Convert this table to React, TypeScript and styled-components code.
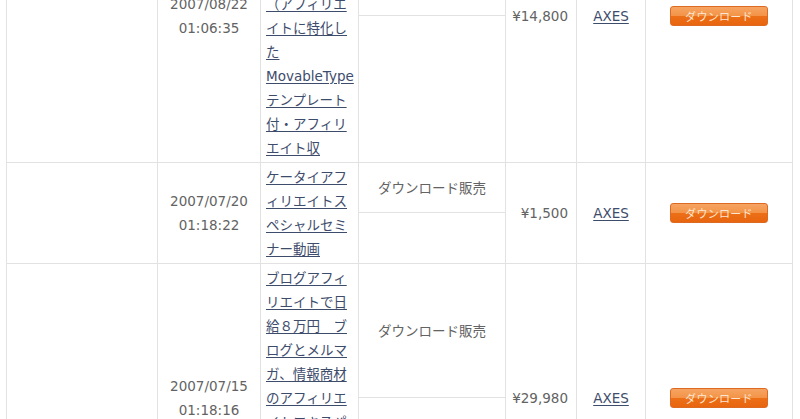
import React from 'react';
import styled, { createGlobalStyle } from 'styled-components';

const Global = createGlobalStyle`
  html, body { margin: 0; padding: 0; background: #ffffff; overflow: hidden; }
  body { font-family: "DejaVu Sans", "Noto Sans CJK JP", sans-serif; }
`;

const Page = styled.div`
  width: 800px;
  height: 419px;
  overflow: hidden;
  padding-left: 6px;
  box-sizing: border-box;
`;

const Table = styled.div`
  display: grid;
  grid-template-columns: 151px 103px 98px 147px 71px 69px 147px;
  width: max-content;
  margin-top: -131px;
  border-left: 1px solid #e2e2e2;
  border-top: 1px solid #e2e2e2;
  font-size: 13.5px;
  line-height: 24px;
  color: #636363;
`;

const Cell = styled.div<{ $align?: 'flex-start' | 'center' | 'flex-end' }>`
  display: flex;
  align-items: center;
  justify-content: ${(p) => p.$align ?? 'center'};
  text-align: ${(p) => (p.$align === 'flex-end' ? 'right' : p.$align === 'flex-start' ? 'left' : 'center')};
  border-right: 1px solid #e2e2e2;
  border-bottom: 1px solid #e2e2e2;
  padding: 2px 0;
  min-width: 0;
`;

const PriceCell = styled(Cell)`
  padding-right: 8px;
`;

const TitleCell = styled(Cell)`
  padding: 2px 2px 2px 5px;
  align-items: flex-start;
`;

const TitleLink = styled.a`
  color: #3e4c6c;
  text-decoration: underline;
  text-underline-offset: 2px;
  line-break: normal;
`;

const VendorLink = styled.a`
  color: #3e4c6c;
  text-decoration: underline;
  text-underline-offset: 2px;
`;

const TypeCell = styled.div`
  display: grid;
  grid-template-rows: 1fr 1fr;
  border-right: 1px solid #e2e2e2;
  border-bottom: 1px solid #e2e2e2;
`;

const TypeHalf = styled.div<{ $top?: boolean }>`
  display: flex;
  align-items: center;
  justify-content: center;
  border-bottom: ${(p) => (p.$top ? '1px solid #e2e2e2' : 'none')};
`;

const DownloadButton = styled.button`
  box-sizing: border-box;
  width: 98px;
  height: 20px;
  padding: 0;
  border: 1px solid #dd6a22;
  border-radius: 3px;
  background: linear-gradient(#f6a462 0%, #f39448 48%, #ec6f18 52%, #e8650f 100%);
  color: #fde6cf;
  font-family: "Noto Sans CJK JP", sans-serif;
  font-size: 11px;
  line-height: 18px;
  letter-spacing: 0.3px;
  cursor: pointer;
`;

type Item = { date: string; time: string; title: string; price: string };

const items: Item[] = [
  {
    date: '2007/08/22',
    time: '01:06:35',
    title:
      'アフィリエイトで月収１００万円を稼ぐブログ構築マニュアル全集（アフィリエイトに特化したMovableTypeテンプレート付・アフィリエイト収',
    price: '¥14,800',
  },
  {
    date: '2007/07/20',
    time: '01:18:22',
    title: 'ケータイアフィリエイトスペシャルセミナー動画',
    price: '¥1,500',
  },
  {
    date: '2007/07/15',
    time: '01:18:16',
    title:
      'ブログアフィリエイトで日給８万円　ブログとメルマガ、情報商材のアフィリエイトエキスパートが教える実践ノウハウを大公開する特別セミナー',
    price: '¥29,980',
  },
];

export default function App() {
  return (
    <>
      <Global />
      <Page>
        <Table>
          {items.map((it) => (
            <React.Fragment key={it.date + it.time}>
              <Cell />
              <Cell>
                {it.date}
                <br />
                {it.time}
              </Cell>
              <TitleCell $align="flex-start">
                <TitleLink href="#">{it.title}</TitleLink>
              </TitleCell>
              <TypeCell>
                <TypeHalf $top>ダウンロード販売</TypeHalf>
                <TypeHalf />
              </TypeCell>
              <PriceCell $align="flex-end">{it.price}</PriceCell>
              <Cell>
                <VendorLink href="#">AXES</VendorLink>
              </Cell>
              <Cell>
                <DownloadButton type="button">ダウンロード</DownloadButton>
              </Cell>
            </React.Fragment>
          ))}
        </Table>
      </Page>
    </>
  );
}
